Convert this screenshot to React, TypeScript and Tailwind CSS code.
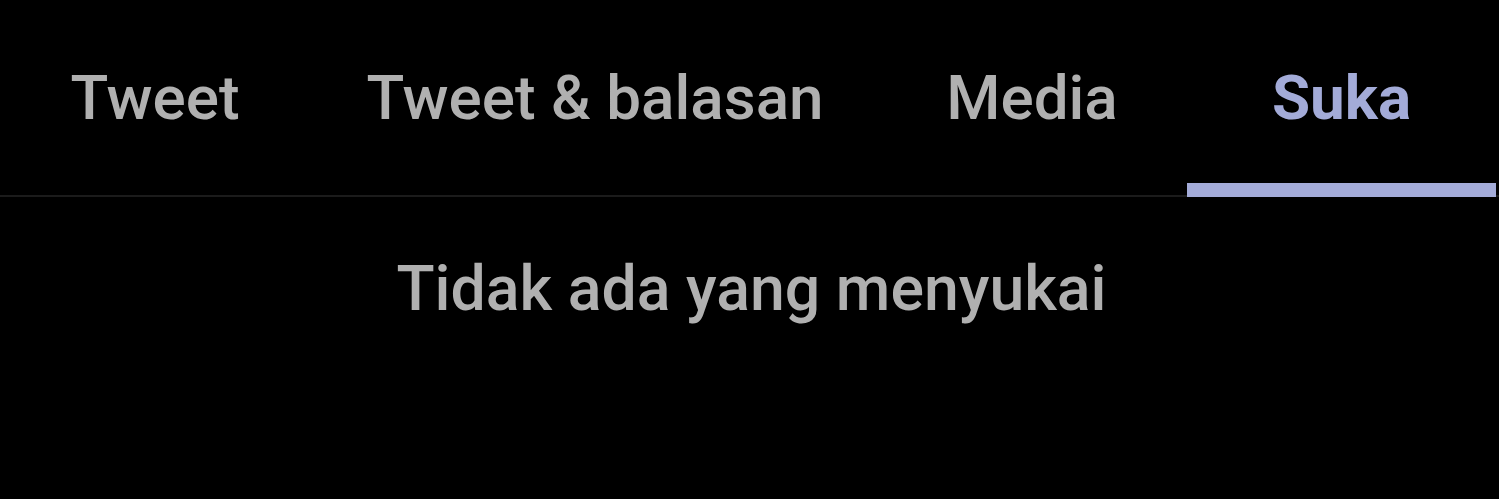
const tabs = [
  { label: "Tweet", width: "w-[310px]" },
  { label: "Tweet & balasan", width: "w-[570px]" },
  { label: "Media", width: "w-[304px]" },
  { label: "Suka", width: "flex-1", active: true },
];

export default function App() {
  return (
    <div
      className="h-[499px] w-[1499px] overflow-hidden bg-black"
      style={{ fontFamily: "Roboto, 'Noto Sans', sans-serif" }}
    >
      <div className="flex h-[197px] border-b-2 border-[#1b1b1b]">
        {tabs.map((tab) => (
          <div
            key={tab.label}
            className={`relative flex ${tab.width} items-start justify-center pt-[58px]`}
          >
            <span
              className={`text-[62px] leading-[80px] ${
                tab.active ? "font-bold text-[#a3abd8]" : "font-medium text-[#b0b0b0]"
              }`}
            >
              {tab.label}
            </span>
            {tab.active && (
              <div className="absolute bottom-[-2px] left-[3px] right-[3px] h-[14px] bg-[#a3abd8]" />
            )}
          </div>
        ))}
      </div>
      <div className="flex justify-center pt-[52px] pl-[4px]">
        <span className="text-[62.6px] font-medium leading-[80px] text-[#b0b0b0]">
          Tidak ada yang menyukai
        </span>
      </div>
    </div>
  );
}
